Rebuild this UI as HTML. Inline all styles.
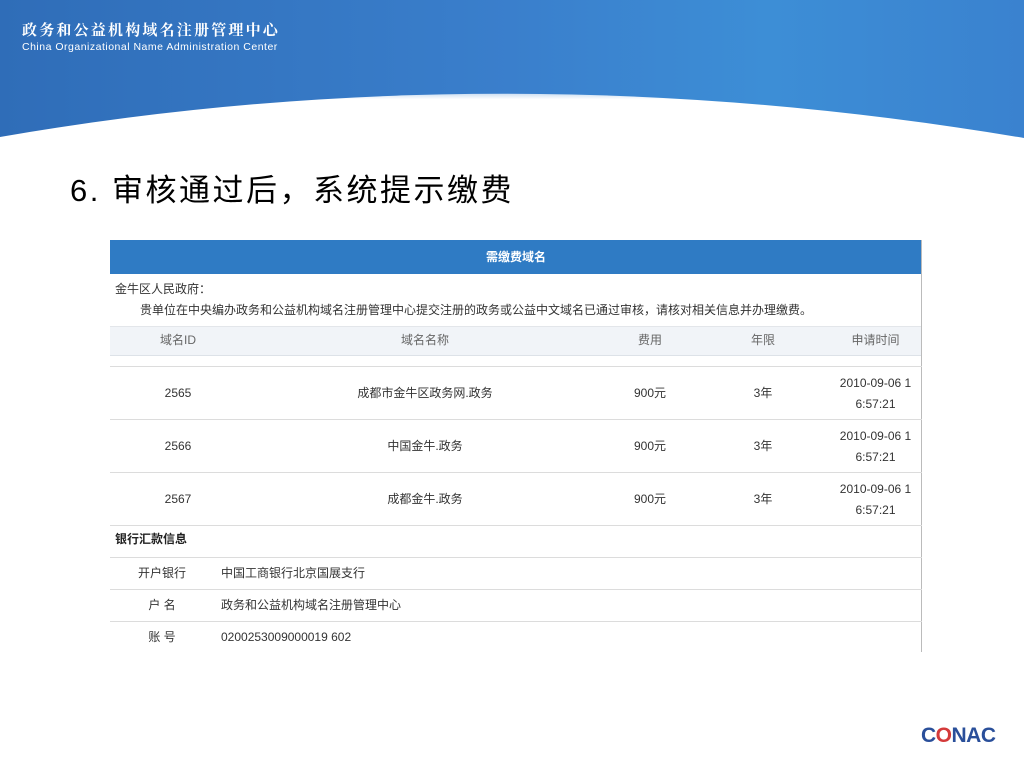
<!DOCTYPE html>
<html><head><meta charset="utf-8"><style>
*{margin:0;padding:0;box-sizing:border-box}
body{width:1024px;height:768px;position:relative;background:#fff;overflow:hidden;font-family:"Liberation Sans","Noto Sans CJK SC",sans-serif;color:#333}
.a{position:absolute;white-space:nowrap}
.t{font-size:12px;color:#333;line-height:16px}
.hl{position:absolute;left:110px;width:812px;height:1px;background:#dcdcdc}
.c{position:absolute;text-align:center;font-size:12px;color:#333;line-height:16px}
</style></head><body>
<svg class="a" style="left:0;top:0" width="1024" height="140">
<defs><linearGradient id="g" x1="0" y1="0" x2="1" y2="0">
<stop offset="0" stop-color="#2f6db8"/><stop offset="0.5" stop-color="#3a7fcc"/><stop offset="0.75" stop-color="#3d8ed6"/><stop offset="1" stop-color="#3a82cf"/></linearGradient>
<linearGradient id="w" x1="0" y1="0" x2="0" y2="1"><stop offset="0" stop-color="#cfe0f2"/><stop offset="0.12" stop-color="#fff"/></linearGradient></defs>
<rect width="1024" height="140" fill="url(#g)"/>
<path d="M0 137 Q500 50 1024 138 L1024 140 L0 140 Z" fill="url(#w)"/>
</svg>
<div class="a" style="left:22px;top:19px;font-size:15px;color:#fff;font-family:'Noto Serif CJK SC',serif;letter-spacing:2.2px;font-weight:bold">政务和公益机构域名注册管理中心</div>
<div class="a" style="left:22px;top:41px;font-size:10.5px;color:#fff;letter-spacing:0.5px">China Organizational Name Administration Center</div>
<div class="a" style="left:70px;top:165px;font-size:31px;color:#000;letter-spacing:2.5px">6. 审核通过后，系统提示缴费</div>

<div class="a" style="left:110px;top:240px;width:812px;height:34px;background:#2f7bc4;color:#fff;text-align:center;font-size:12px;line-height:34px;font-weight:bold">需缴费域名</div>
<div class="a" style="left:921px;top:240px;width:1px;height:412px;background:#bbb"></div>
<div class="a t" style="left:115px;top:281px">金牛区人民政府：</div>
<div class="a t" style="left:140px;top:302px">贵单位在中央编办政务和公益机构域名注册管理中心提交注册的政务或公益中文域名已通过审核，请核对相关信息并办理缴费。</div>
<div class="a" style="left:110px;top:326px;width:811px;height:30px;background:#f1f4f8;border-top:1px solid #e3e6ea;border-bottom:1px solid #dde2e8"></div>
<div class="c" style="left:110px;width:136px;top:332px;color:#666">域名ID</div>
<div class="c" style="left:246px;width:358px;top:332px;color:#666">域名名称</div>
<div class="c" style="left:604px;width:92px;top:332px;color:#666">费用</div>
<div class="c" style="left:696px;width:134px;top:332px;color:#666">年限</div>
<div class="c" style="left:830px;width:91px;top:332px;color:#666">申请时间</div>
<div class="hl" style="top:366px"></div>
<div class="c" style="left:110px;width:136px;top:385px">2565</div><div class="c" style="left:246px;width:358px;top:385px">成都市金牛区政务网.政务</div><div class="c" style="left:604px;width:92px;top:385px">900元</div><div class="c" style="left:696px;width:134px;top:385px">3年</div><div class="c" style="left:830px;width:91px;top:373px;line-height:21px">2010-09-06 1<br>6:57:21</div>
<div class="hl" style="top:419px"></div>
<div class="c" style="left:110px;width:136px;top:438px">2566</div><div class="c" style="left:246px;width:358px;top:438px">中国金牛.政务</div><div class="c" style="left:604px;width:92px;top:438px">900元</div><div class="c" style="left:696px;width:134px;top:438px">3年</div><div class="c" style="left:830px;width:91px;top:426px;line-height:21px">2010-09-06 1<br>6:57:21</div>
<div class="hl" style="top:472px"></div>
<div class="c" style="left:110px;width:136px;top:491px">2567</div><div class="c" style="left:246px;width:358px;top:491px">成都金牛.政务</div><div class="c" style="left:604px;width:92px;top:491px">900元</div><div class="c" style="left:696px;width:134px;top:491px">3年</div><div class="c" style="left:830px;width:91px;top:479px;line-height:21px">2010-09-06 1<br>6:57:21</div>
<div class="hl" style="top:525px"></div>
<div class="a t" style="left:115px;top:531px;font-weight:bold;color:#222">银行汇款信息</div>
<div class="hl" style="top:557px"></div>
<div class="c" style="left:110px;width:104px;top:565px">开户银行</div><div class="a t" style="left:221px;top:565px">中国工商银行北京国展支行</div>
<div class="hl" style="top:589px"></div>
<div class="c" style="left:110px;width:104px;top:597px">户 名</div><div class="a t" style="left:221px;top:597px">政务和公益机构域名注册管理中心</div>
<div class="hl" style="top:621px"></div>
<div class="c" style="left:110px;width:104px;top:629px">账 号</div><div class="a t" style="left:221px;top:629px">0200253009000019 602</div>

<div class="a" style="left:921px;top:724px;font-size:21px;font-weight:bold;color:#2a4f9a;letter-spacing:-0.5px">C<span style="color:#d43a3a">O</span>NAC</div>
</body></html>
